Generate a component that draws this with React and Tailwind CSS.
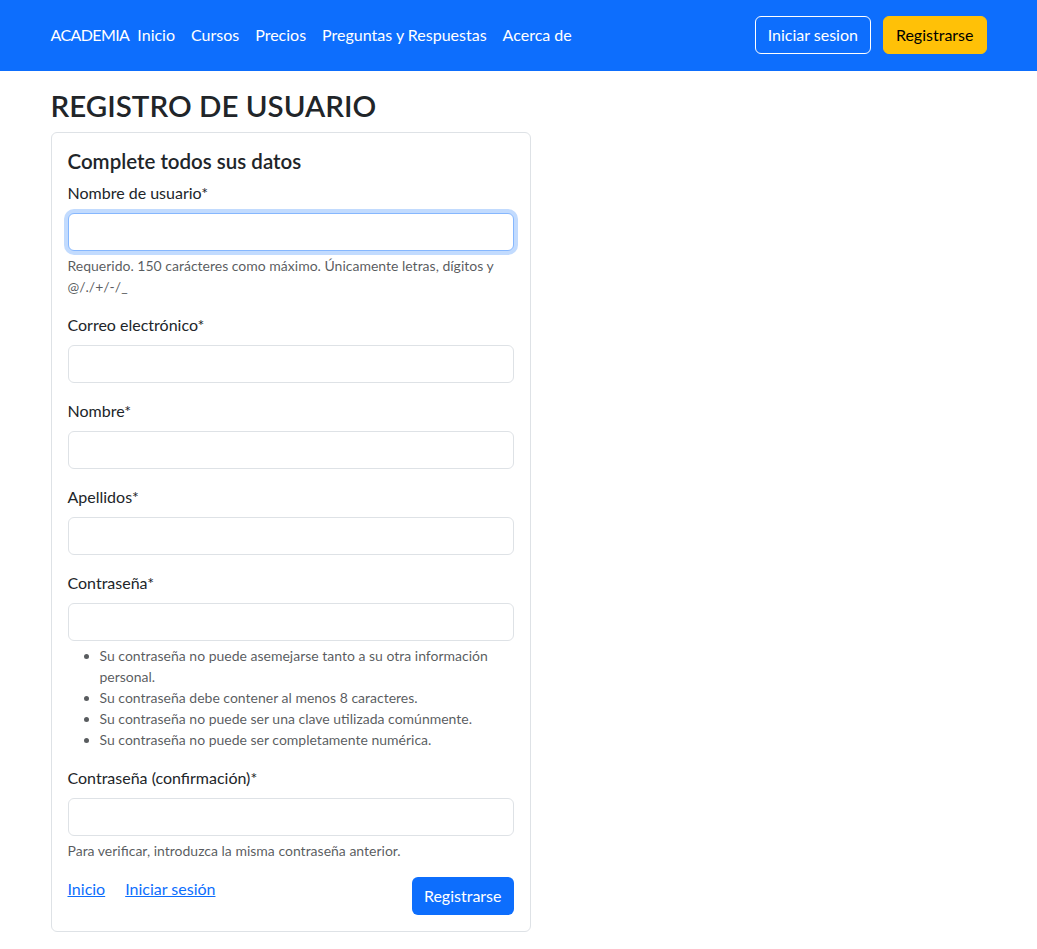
const navLinks = ["Inicio", "Cursos", "Precios", "Preguntas y Respuestas", "Acerca de"];

const passwordRules = [
  "Su contraseña no puede asemejarse tanto a su otra información personal.",
  "Su contraseña debe contener al menos 8 caracteres.",
  "Su contraseña no puede ser una clave utilizada comúnmente.",
  "Su contraseña no puede ser completamente numérica.",
];

function Field({ label, type = "text", focused = false, children }) {
  return (
    <div className="mb-4">
      <label className="block mb-2 leading-6">{label}</label>
      <input
        type={type}
        className={
          "block w-full h-[38px] rounded-[6px] border bg-white px-3 outline-none " +
          (focused
            ? "border-[#86b7fe] shadow-[0_0_0_4px_rgba(13,110,253,0.25)]"
            : "border-[#dee2e6]")
        }
      />
      {children}
    </div>
  );
}

export default function App() {
  return (
    <div className="min-h-screen bg-white text-[#212529] text-base font-['Lato','Noto_Sans',sans-serif]">
      <nav className="bg-[#0d6efd] h-[71px]">
        <div className="mx-auto w-[960px] px-3 h-full flex items-center justify-between">
          <div className="flex items-center -mt-px">
            <span className="text-white mr-2 tracking-[-0.6px]">ACADEMIA</span>
            <ul className="flex items-center gap-4">
              {navLinks.map((l) => (
                <li key={l} className="text-white">
                  {l}
                </li>
              ))}
            </ul>
          </div>
          <div className="flex items-center gap-3 -mt-px">
            <button className="h-[38px] px-3 rounded-[6px] border border-white text-white">
              Iniciar sesion
            </button>
            <button className="h-[38px] px-3 rounded-[6px] bg-[#ffc107] border border-[#ffc107] text-black">
              Registrarse
            </button>
          </div>
        </div>
      </nav>

      <main className="mx-auto w-[960px] px-3 pt-3">
        <h1 className="text-[29.5px] leading-[45px] font-semibold mb-1">REGISTRO DE USUARIO</h1>

        <div className="w-[480px] border border-[#dee2e6] rounded-[6px] p-4">
          <h5 className="text-[20.5px] leading-6 font-semibold mb-2">Complete todos sus datos</h5>

          <Field label="Nombre de usuario*" focused>
            <div className="mt-1 text-sm leading-[21px] text-[rgba(33,37,41,0.75)]">
              Requerido. 150 carácteres como máximo. Únicamente letras, dígitos y @/./+/-/_
            </div>
          </Field>
          <Field label="Correo electrónico*" type="email" />
          <Field label="Nombre*" />
          <Field label="Apellidos*" />
          <Field label="Contraseña*" type="password">
            <ul className="mt-1 pl-8 list-disc text-sm leading-[21px] text-[rgba(33,37,41,0.75)]">
              {passwordRules.map((r) => (
                <li key={r}>{r}</li>
              ))}
            </ul>
          </Field>
          <div>
            <label className="block mb-2 leading-6">Contraseña (confirmación)*</label>
            <input
              type="password"
              className="block w-full h-[38px] rounded-[6px] border border-[#dee2e6] bg-white px-3 outline-none"
            />
            <div className="mt-1 text-sm leading-[21px] text-[rgba(33,37,41,0.75)]">
              Para verificar, introduzca la misma contraseña anterior.
            </div>
          </div>

          <div className="mt-4 flex items-start justify-between">
            <div className="flex gap-5 leading-6">
              <a href="#" className="text-[#0d6efd] underline">Inicio</a>
              <a href="#" className="text-[#0d6efd] underline">Iniciar sesión</a>
            </div>
            <button className="h-[38px] px-3 rounded-[6px] bg-[#0d6efd] text-white">
              Registrarse
            </button>
          </div>
        </div>
      </main>
    </div>
  );
}
